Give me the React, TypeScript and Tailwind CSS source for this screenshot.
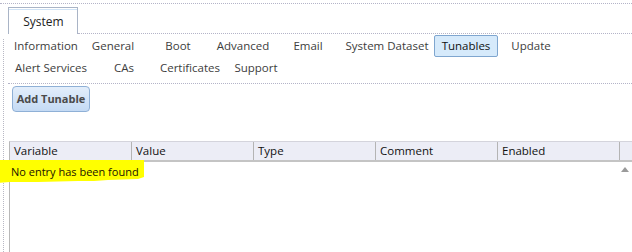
import React from 'react';

const row1 = [
  { label: 'Information', w: 68 },
  { label: 'General', w: 66 },
  { label: 'Boot', w: 64 },
  { label: 'Advanced', w: 66 },
  { label: 'Email', w: 64 },
  { label: 'System Dataset', w: 94 },
  { label: 'Tunables', w: 64, active: true },
  { label: 'Update', w: 66 },
];

const row2 = [
  { label: 'Alert Services', w: 78 },
  { label: 'CAs', w: 68 },
  { label: 'Certificates', w: 64 },
  { label: 'Support', w: 68 },
];

const columns = ['Variable', 'Value', 'Type', 'Comment', 'Enabled'];

const NavItem: React.FC<{ label: string; w: number; active?: boolean }> = ({ label, w, active }) => (
  <div
    className={`h-[22px] flex items-center justify-center shrink-0 ${
      active
        ? 'bg-[#d6eafb] border border-[#7fa6cf] rounded-[2px] text-[#111]'
        : 'text-[#3d3d3d]'
    }`}
    style={{ width: w }}
  >
    {label}
  </div>
);

export default function App() {
  return (
    <div
      className="w-[632px] h-[252px] bg-white overflow-hidden text-[11.5px] flex flex-col"
      style={{ fontFamily: '"Open Sans", "Noto Sans", sans-serif' }}
    >
      {/* top rule */}
      <div className="mt-[3px] border-t border-dotted border-[#b4b4c8]" />

      {/* top tab */}
      <div className="flex h-[30px]">
        <div className="mt-[3px] ml-[8px] w-[70px] h-[27px] border border-b-0 border-[#a9b4c6] bg-white flex flex-col">
          <div className="h-[2px] border-b border-[#cfe3f6]" />
          <div className="flex-1 flex items-center justify-center pl-[1px] text-[#222] text-[12px]">System</div>
        </div>
        <div className="flex-1 border-b border-dotted border-[#b4b4c8]" />
      </div>

      {/* body */}
      <div className="flex-1 ml-[3px] mt-[5px] border-l border-dotted border-[#b8b8c4] flex flex-col">
        <div className="pl-[8px] -mt-[4px] flex flex-col">
          <div className="flex">
            {row1.map((i) => (
              <NavItem key={i.label} {...i} />
            ))}
          </div>
          <div className="flex">
            {row2.map((i) => (
              <NavItem key={i.label} {...i} />
            ))}
          </div>
        </div>

        <div className="mt-[4px] ml-[4px] flex-1 border-t border-dotted border-[#b4b4c8] flex flex-col">
          <div className="pl-[4px] pt-[2px]">
            <button className="w-[78px] h-[26px] rounded-[4px] border border-[#8fb0d6] bg-gradient-to-b from-[#e3eefb] to-[#c4daf4] text-[#4a4a4a] font-bold text-[11px]">
              Add Tunable
            </button>
          </div>

          <div className="mt-[29px] flex-1 flex flex-col">
            <div className="flex h-[21px] ml-[1px] bg-[#ecedf6] border-t border-[#d4d4dc] border-b-2 border-b-[#c4c4c4] border-l border-l-[#b8b8b8]">
              {columns.map((c) => (
                <div
                  key={c}
                  className="w-[122px] shrink-0 border-r border-[#b4b4b4] pl-[4px] flex items-center text-[#111] text-[11.5px]"
                >
                  {c}
                </div>
              ))}
              <div className="flex-1" />
            </div>

            <div className="flex-1 flex ml-[1px] border-l border-[#b8b8b8]">
              <div className="relative flex-1 h-[22px]">
                <svg
                  className="absolute left-[-12px] top-[-2px]"
                  width="146"
                  height="24"
                  viewBox="0 0 146 24"
                >
                  <path
                    d="M0 0 H146 V17 L140 19 L110 20 L96 21 L80 21 L40 22 L12 22 L0 23 Z"
                    fill="#ffff00"
                  />
                </svg>
                <div className="relative pl-[1px] pt-[1px] text-[#1a1200] text-[11px] leading-[18px]">
                  No entry has been found
                </div>
              </div>
              <div className="w-[14px] pt-[5px] flex justify-center">
                <svg width="8" height="5" viewBox="0 0 8 5">
                  <path d="M0 5 L4 0 L8 5 Z" fill="#9a9a9a" />
                </svg>
              </div>
            </div>
          </div>
        </div>
      </div>
    </div>
  );
}
